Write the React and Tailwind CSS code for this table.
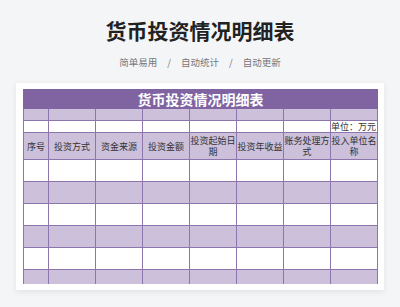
const cols = [25, 47, 47, 47, 47, 47, 47, 47]
const headers = ['序号', '投资方式', '资金来源', '投资金额', '投资起始日期', '投资年收益', '账务处理方式', '投入单位名称']

export default function App() {
  const dataRows = [0, 1, 2, 3, 4, 5]

  return (
    <div
      className="w-[400px] h-[307px] bg-[#f4f5f7] overflow-hidden flex flex-col items-center"
      style={{ fontFamily: '"Noto Sans CJK SC", "Noto Sans", sans-serif' }}
    >
      <h1 className="pt-[15px] text-[21px] leading-[30px] font-bold text-[#222]">货币投资情况明细表</h1>
      <div className="mt-[10px] flex items-center text-[9.5px] leading-[14px] text-[#777]">
        <span>简单易用</span>
        <span className="mx-[10px]">/</span>
        <span>自动统计</span>
        <span className="mx-[10px]">/</span>
        <span>自动更新</span>
      </div>
      <div className="mt-[14px] w-[368px] h-[207px] bg-white shadow-[0_2px_6px_rgba(0,0,0,0.08)] pt-[6px] pl-[7px]">
        <div className="h-[195px] overflow-hidden">
          <table className="table-fixed border-collapse w-[354px] text-[#333]">
            <colgroup>
              {cols.map((w, i) => (
                <col key={i} style={{ width: w }} />
              ))}
            </colgroup>
            <tbody>
              <tr className="h-[19px] bg-[#8064a2]">
                <td colSpan={8} className="border border-[#8064a2] text-center text-white text-[14px] leading-[18px] font-bold p-0">
                  货币投资情况明细表
                </td>
              </tr>
              <tr className="h-[12px] bg-[#ccc0da]">
                {cols.map((_, i) => (
                  <td key={i} className="border border-[#8d75ad] p-0" />
                ))}
              </tr>
              <tr className="h-[12px] bg-white">
                {cols.map((_, i) => (
                  <td key={i} className="border border-[#8d75ad] p-0 text-right text-[9px] leading-[10px] whitespace-nowrap pr-[1px]">
                    {i === 7 ? '单位：万元' : ''}
                  </td>
                ))}
              </tr>
              <tr className="h-[27px] bg-[#ccc0da]">
                {headers.map((h, i) => (
                  <td key={i} className="border border-[#8d75ad] p-0 text-center text-[9px] leading-[11px] break-all">
                    {h}
                  </td>
                ))}
              </tr>
              {dataRows.map((r) => (
                <tr key={r} className={`h-[22px] ${r % 2 === 0 ? 'bg-white' : 'bg-[#ccc0da]'}`}>
                  {cols.map((_, i) => (
                    <td key={i} className="border border-[#8d75ad] p-0" />
                  ))}
                </tr>
              ))}
            </tbody>
          </table>
        </div>
      </div>
    </div>
  )
}
